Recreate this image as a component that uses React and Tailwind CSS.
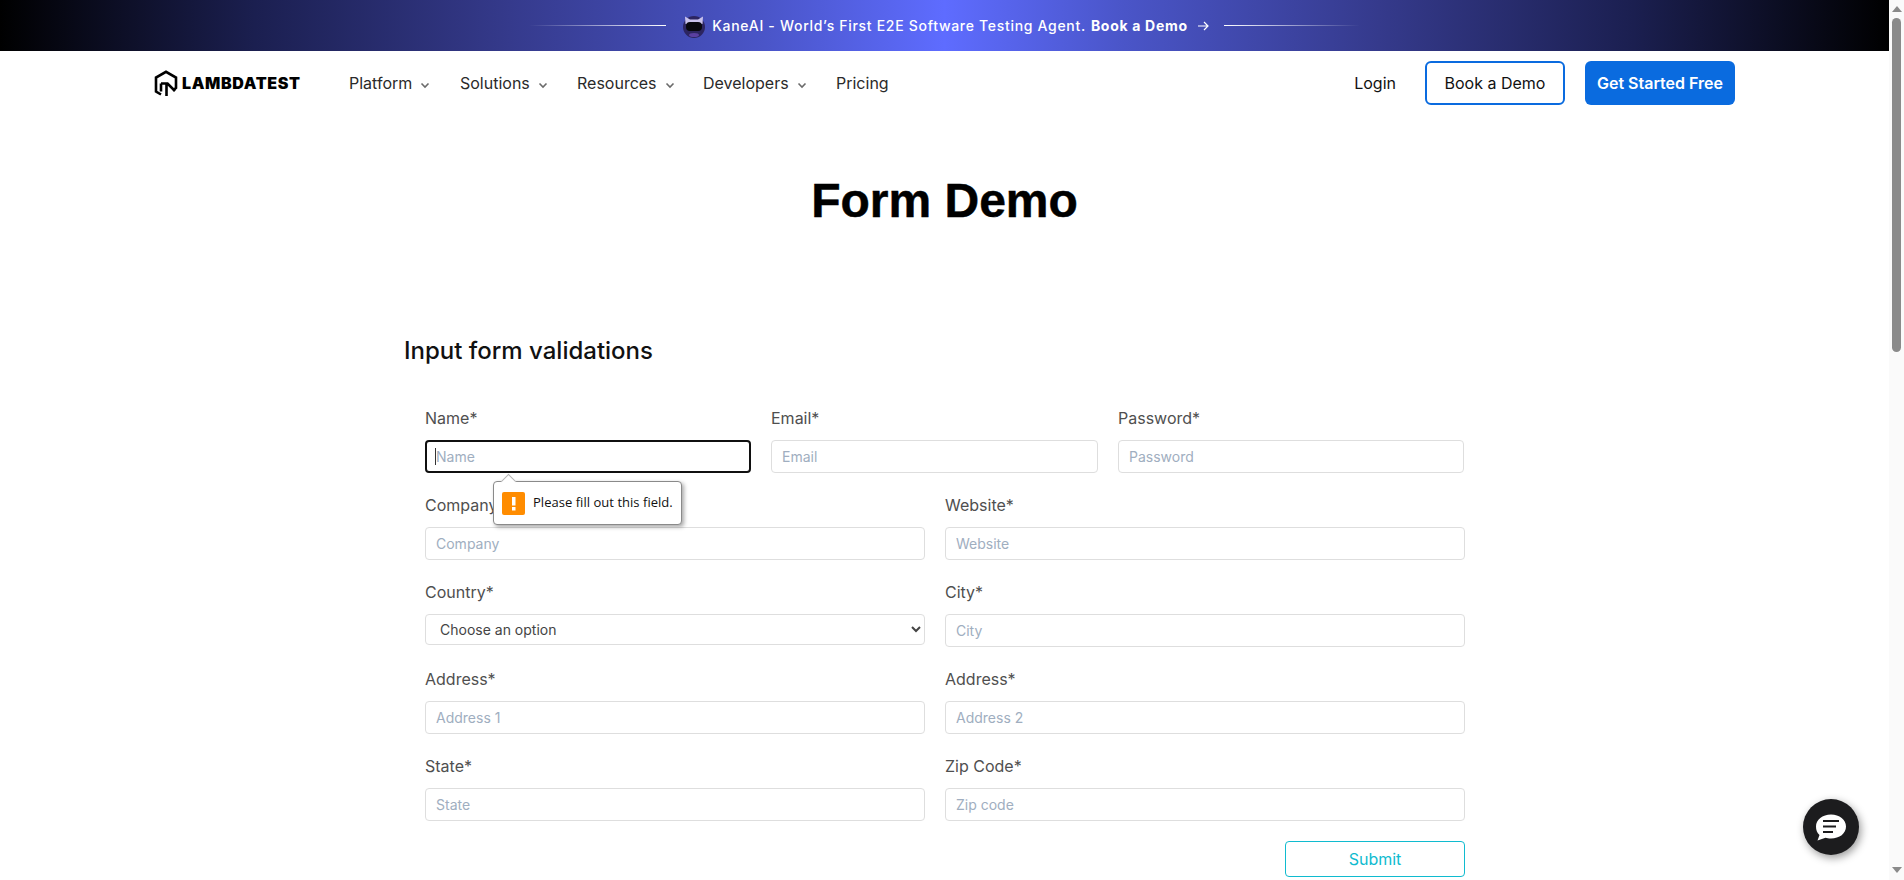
import React from "react";

const Chevron = () => (
  <svg width="10" height="10" viewBox="0 0 10 10" className="ml-[8px] mt-[4px]" fill="none" stroke="#6b6b6b" strokeWidth="1.6">
    <path d="M1.5 3.5 5 7l3.5-3.5" />
  </svg>
);

const NavItem = ({ children, cls, chevron = true }) => (
  <a className={`flex items-center text-[16px] text-[#2a2a2a] ${cls}`}>
    {children}
    {chevron && <Chevron />}
  </a>
);

const Field = ({ label, placeholder, children, focused }) => (
  <div className="flex flex-col">
    <label className="text-[16px] leading-[24px] text-[#4f4f4f] mb-[10px] mt-[-7px]">{label}</label>
    {children || (
      <div className="relative">
        <input
          placeholder={placeholder}
          className={`w-full h-[33px] rounded-[4px] bg-white text-[14px] outline-none placeholder:text-[#a0aec0] ${
            focused ? "border-2 border-[#101010] pl-[9px]" : "border border-[#dedede] pl-[10px]"
          }`}
        />
        {focused && <span className="absolute left-[10px] top-[8px] w-px h-[17px] bg-[#333]" />}
      </div>
    )}
  </div>
);

export default function App() {
  return (
    <div className="flex w-full h-[880px] overflow-hidden bg-white font-['Inter',sans-serif]">
      <div className="flex-1 min-w-0 flex flex-col relative">
        <div className="h-[51px] flex items-center justify-center text-white bg-[linear-gradient(90deg,#000_0%,#1b1f50_13.5%,#353a8c_27%,#4a55c8_40.5%,#5e6cff_50%,#4a55c8_59.5%,#353a8c_73%,#1b1f50_86.5%,#000_100%)]">
          <span className="w-[137px] h-px bg-gradient-to-r from-transparent to-white" />
          <svg width="24" height="26" viewBox="0 0 24 26" className="ml-[16px] mr-[6px]">
            <circle cx="12" cy="14" r="11" fill="#2c2560" />
            <path d="M3.500 11 3 3.500 8 6.500h8l5-3-.5 7.500z" fill="#c9c2ec" />
            <rect x="4" y="9" width="16" height="9" rx="4" fill="#08080e" />
            <ellipse cx="12" cy="22" rx="5" ry="2" fill="#5a3fa0" />
          </svg>
          <span className="text-[14px] font-medium tracking-[0.7px]">KaneAI - World’s First E2E Software Testing Agent.</span>
          <span className="text-[14px] font-bold tracking-[0.7px] ml-[5px]">Book a Demo</span>
          <svg width="12" height="12" viewBox="0 0 12 12" className="ml-[9px]" fill="none" stroke="#fff" strokeWidth="1.2">
            <path d="M1 6h10M7 2l4 4-4 4" />
          </svg>
          <span className="w-[136px] h-px ml-[15px] bg-gradient-to-r from-white to-transparent" />
        </div>

        <nav className="h-[64px] flex items-center pl-[154px]">
          <svg width="24" height="26" viewBox="0 0 24 26" fill="none" stroke="#000" strokeWidth="2.6" className="mr-[4px]">
            <path d="M7 24.500 2 21.500V7.500L12 1.800 22 7.500v10.500L19 20.500" />
            <path d="M7 13.500h6.500L21 21M12.500 13.500V26M7 13.500v8" />
          </svg>
          <span className="text-[16px] font-black tracking-[0.65px] text-black w-[119px] whitespace-nowrap">LAMBDATEST</span>
          <NavItem cls="ml-[48px] w-[110px]">Platform</NavItem>
          <NavItem cls="w-[118px] ml-[1px]">Solutions</NavItem>
          <NavItem cls="w-[126px] ml-[-1px]">Resources</NavItem>
          <NavItem cls="w-[133px]">Developers</NavItem>
          <NavItem chevron={false}>Pricing</NavItem>
          <div className="flex-1" />
          <a className="text-[16px] text-[#111] mr-[29px]">Login</a>
          <a className="h-[44px] w-[140px] flex items-center justify-center rounded-[6px] border-2 border-[#0a6bdf] text-[16px] text-[#111] mr-[20px]">Book a Demo</a>
          <a className="h-[44px] w-[150px] flex items-center justify-center rounded-[6px] bg-[#0a6bdf] text-[16px] font-semibold text-white mr-[154px]">Get Started Free</a>
        </nav>

        <h1 className="mt-[56px] text-center text-[48px] leading-[60px] font-bold text-black font-['Liberation_Sans',sans-serif] [-webkit-text-stroke:0.5px_black]">Form Demo</h1>

        <div className="w-[1061px] ml-[404px] mt-[104px]">
          <h2 className="text-[24px] leading-[32px] font-medium text-[#111]">Input form validations</h2>
          <form className="relative ml-[21px] w-[1040px] mt-[46px]">
            <div className="grid grid-cols-[326px_327px_346px] gap-x-[20px]">
              <Field label="Name*" placeholder="Name" focused />
              <Field label="Email*" placeholder="Email" />
              <Field label="Password*" placeholder="Password" />
            </div>
            <div className="grid grid-cols-[500px_520px] gap-x-[20px] mt-[27px]">
              <Field label="Company*" placeholder="Company" />
              <Field label="Website*" placeholder="Website" />
            </div>
            <div className="grid grid-cols-[500px_520px] gap-x-[20px] mt-[27px]">
              <Field label="Country*">
                <select className="w-full h-[31px] rounded-[4px] border border-[#dedede] bg-white text-[14px] text-[#444] pl-[10px]">
                  <option>Choose an option</option>
                </select>
              </Field>
              <Field label="City*" placeholder="City" />
            </div>
            <div className="grid grid-cols-[500px_520px] gap-x-[20px] mt-[27px]">
              <Field label="Address*" placeholder="Address 1" />
              <Field label="Address*" placeholder="Address 2" />
            </div>
            <div className="grid grid-cols-[500px_520px] gap-x-[20px] mt-[27px]">
              <Field label="State*" placeholder="State" />
              <Field label="Zip Code*" placeholder="Zip code" />
            </div>
            <div className="flex justify-end mt-[20px]">
              <button type="button" className="w-[180px] h-[36px] rounded-[4px] border border-[#10bbcf] text-[16px] text-[#10bbcf] bg-white">Submit</button>
            </div>

            <div className="absolute left-[68px] top-[68px] w-[189px] h-[44px] bg-white border border-[#8a8a8a] rounded-[4px] shadow-[2px_2px_4px_rgba(0,0,0,0.35)] flex items-center pl-[8px]">
              <span className="absolute left-[9px] top-[-6px] w-[11px] h-[11px] rotate-45 bg-white border-l border-t border-[#b5b5b5]" />
              <svg width="23" height="23" viewBox="0 0 23 23">
                <rect width="23" height="23" rx="2" fill="#ff8c00" />
                <rect x="10" y="5" width="3.500" height="8.500" fill="#fff" />
                <rect x="10" y="15" width="3.500" height="3.500" fill="#fff" />
              </svg>
              <span className="ml-[8px] text-[13px] tracking-[0.03px] text-[#111] whitespace-nowrap font-['Open_Sans',sans-serif]">Please fill out this field.</span>
            </div>
          </form>
        </div>

        <button className="absolute left-[1803px] top-[799px] w-[56px] h-[56px] rounded-full bg-[#1c1c1e] shadow-[2px_3px_8px_rgba(0,0,0,0.4)] flex items-center justify-center">
          <svg width="30" height="27" viewBox="0 0 30 27">
            <path d="M15 0.500c8.500 0 15 5 15 12s-6.500 12-15 12c-2.500 0-4-.3-5.500-.8L1.500 26.500l2-5.500C1 19 0 16 0 12.500 0 5.500 6.500 0.500 15 0.500z" fill="#fff" />
            <path d="M7 7h16M7 12.500h13M7 18h10" stroke="#1c1c1e" strokeWidth="1.800" />
          </svg>
        </button>
      </div>

      <aside className="w-[15px] shrink-0 bg-[#fafafa] flex flex-col items-center relative">
        <svg width="10" height="6" viewBox="0 0 10 6" className="mt-[6px]"><path d="M5 0l5 6H0z" fill="#8a8a8a" /></svg>
        <div className="w-[9px] h-[334px] mt-[6px] rounded-full bg-[#8a8a8a]" />
        <div className="flex-1" />
        <svg width="10" height="6" viewBox="0 0 10 6" className="mb-[7px]"><path d="M5 6l5-6H0z" fill="#8a8a8a" /></svg>
      </aside>
    </div>
  );
}
